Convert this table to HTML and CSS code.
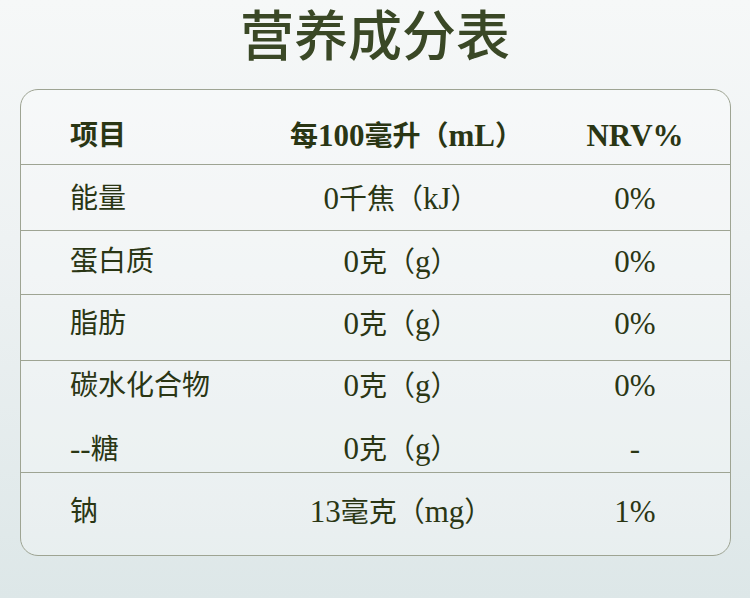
FILE: index.html
```html
<!DOCTYPE html>
<html lang="zh-CN">
<head>
<meta charset="utf-8">
<title>营养成分表</title>
<link rel="stylesheet" href="styles.css">
</head>
<body>
<h1 class="title">营养成分表</h1>
<div class="card">
  <div class="row row-head">
    <div class="c1">项目</div>
    <div class="c2">每<span class="lat">100</span>毫升（<span class="lat">mL</span>）</div>
    <div class="c3"><span class="lat">NRV%</span></div>
  </div>
  <div class="row row-a">
    <div class="c1">能量</div>
    <div class="c2"><span class="lat">0</span>千焦（<span class="lat">kJ</span>）</div>
    <div class="c3"><span class="lat">0%</span></div>
  </div>
  <div class="row row-b">
    <div class="c1">蛋白质</div>
    <div class="c2"><span class="lat">0</span>克（<span class="lat">g</span>）</div>
    <div class="c3"><span class="lat">0%</span></div>
  </div>
  <div class="row row-c">
    <div class="c1">脂肪</div>
    <div class="c2"><span class="lat">0</span>克（<span class="lat">g</span>）</div>
    <div class="c3"><span class="lat">0%</span></div>
  </div>
  <div class="row row-d">
    <div class="c1">碳水化合物</div>
    <div class="c2"><span class="lat">0</span>克（<span class="lat">g</span>）</div>
    <div class="c3"><span class="lat">0%</span></div>
  </div>
  <div class="row row-e">
    <div class="c1"><span class="lat">--</span>糖</div>
    <div class="c2"><span class="lat">0</span>克（<span class="lat">g</span>）</div>
    <div class="c3"><span class="lat">-</span></div>
  </div>
  <div class="row row-f">
    <div class="c1">钠</div>
    <div class="c2"><span class="lat">13</span>毫克（<span class="lat">mg</span>）</div>
    <div class="c3"><span class="lat">1%</span></div>
  </div>
</div>
</body>
</html>
```
FILE: styles.css
```css
html, body {
  margin: 0;
  padding: 0;
}
body {
  width: 750px;
  height: 598px;
  overflow: hidden;
  background: linear-gradient(180deg, #f6f8f8 0%, #eef2f3 40%, #dde7e8 100%);
  font-family: "Liberation Serif", "Noto Sans CJK SC", serif;
  color: #2a3614;
}
.title {
  margin: 0;
  height: 76px;
  line-height: 76px;
  text-align: center;
  font-size: 54px;
  font-weight: 500;
  color: #3a4826;
}
.card {
  margin: 13px 19px 0 20px;
  border: 1px solid #9ea493;
  border-radius: 18px;
  background: rgba(255, 255, 255, 0.3);
}
.row {
  box-sizing: border-box;
  display: grid;
  grid-template-columns: 220px 222px 1fr;
  padding-left: 49px;
  font-size: 28px;
  line-height: 30px;
}
.lat {
  font-size: 31px;
  line-height: 30px;
}
.c2 {
  text-align: center;
  white-space: nowrap;
}
.c3 {
  text-align: center;
  padding-left: 28px;
}
.row-head {
  height: 75px;
  padding-top: 31px;
  font-weight: 700;
  border-bottom: 1px solid #9ea493;
}
.row-a {
  height: 66px;
  padding-top: 19px;
  border-bottom: 1px solid #9ea493;
}
.row-b {
  height: 64px;
  padding-top: 16px;
  border-bottom: 1px solid #9ea493;
}
.row-c {
  height: 66px;
  padding-top: 14px;
  border-bottom: 1px solid #9ea493;
}
.row-d {
  height: 63px;
  padding-top: 10px;
}
.row-e {
  height: 49px;
  padding-top: 10px;
  border-bottom: 1px solid #9ea493;
}
.row-f {
  height: 82px;
  padding-top: 24px;
}
```
